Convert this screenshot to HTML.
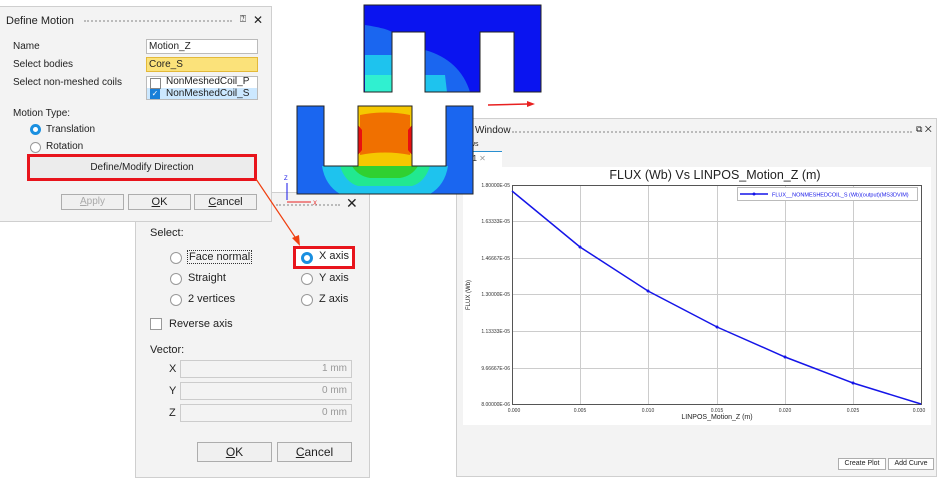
<!DOCTYPE html>
<html><head><style>
body{margin:0;width:940px;height:478px;background:#fff;position:relative;overflow:hidden;font-family:"Liberation Sans",sans-serif;font-size:10px;color:#222}
.a{position:absolute}
.dlg{background:#f3f3f3;border:1px solid #cfcfcf}
.inp{background:#fff;border:1px solid #bbb;box-sizing:border-box;padding-left:2px;line-height:13px}
.btn{background:#f0f0f0;border:1px solid #adadad;box-sizing:border-box;text-align:center}
.rad{width:11px;height:11px;border-radius:50%;border:1px solid #999;background:#fff;box-sizing:border-box}
.dots{border-top:2px dotted #bbb;height:0}
</style></head><body>

<!-- Direction dialog -->
<div class="a dlg" style="left:135px;top:192px;width:233px;height:284px"></div>
<div class="a dots" style="left:276px;top:204px;width:64px"></div>
<div class="a" style="left:346px;top:195px;font-size:14px">✕</div>
<div class="a" style="left:150px;top:227px;font-size:11px">Select:</div>
<div class="a rad" style="left:170px;top:252px;width:12px;height:12px"></div>
<div class="a" style="left:187px;top:250px;font-size:11px;border:1px dotted #333;padding:0 1px">Face normal</div>
<div class="a rad" style="left:170px;top:273px;width:12px;height:12px"></div>
<div class="a" style="left:188px;top:272px;font-size:11px">Straight</div>
<div class="a rad" style="left:170px;top:294px;width:12px;height:12px"></div>
<div class="a" style="left:188px;top:293px;font-size:11px">2 vertices</div>
<div class="a" style="left:293px;top:246px;width:62px;height:23px;border:3px solid #e8141c;box-sizing:border-box;background:#fff"></div>
<div class="a rad" style="left:301px;top:252px;width:12px;height:12px;border:3px solid #1a8fe0"></div>
<div class="a" style="left:319px;top:250px;font-size:11px">X axis</div>
<div class="a rad" style="left:301px;top:273px;width:12px;height:12px"></div>
<div class="a" style="left:319px;top:272px;font-size:11px">Y axis</div>
<div class="a rad" style="left:301px;top:294px;width:12px;height:12px"></div>
<div class="a" style="left:319px;top:293px;font-size:11px">Z axis</div>
<div class="a" style="left:150px;top:318px;width:12px;height:12px;border:1px solid #999;background:#fff;box-sizing:border-box"></div>
<div class="a" style="left:169px;top:318px;font-size:11px">Reverse axis</div>
<div class="a" style="left:150px;top:344px;font-size:11px">Vector:</div>
<div class="a" style="left:169px;top:363px;font-size:11px">X</div>
<div class="a" style="left:169px;top:385px;font-size:11px">Y</div>
<div class="a" style="left:169px;top:407px;font-size:11px">Z</div>
<div class="a" style="left:180px;top:360px;width:172px;height:18px;border:1px solid #ccc;background:#f3f3f3;box-sizing:border-box;text-align:right;padding-right:4px;color:#999;line-height:16px">1 mm</div>
<div class="a" style="left:180px;top:382px;width:172px;height:18px;border:1px solid #ccc;background:#f3f3f3;box-sizing:border-box;text-align:right;padding-right:4px;color:#999;line-height:16px">0 mm</div>
<div class="a" style="left:180px;top:404px;width:172px;height:18px;border:1px solid #ccc;background:#f3f3f3;box-sizing:border-box;text-align:right;padding-right:4px;color:#999;line-height:16px">0 mm</div>
<div class="a btn" style="left:197px;top:442px;width:75px;height:20px;line-height:18px;font-size:12px"><u>O</u>K</div>
<div class="a btn" style="left:277px;top:442px;width:75px;height:20px;line-height:18px;font-size:12px"><u>C</u>ancel</div>

<!-- Define Motion -->
<div class="a dlg" style="left:-1px;top:6px;width:271px;height:214px"></div>
<div class="a" style="left:6px;top:15px;font-size:11px">Define Motion</div>
<div class="a dots" style="left:84px;top:20px;width:148px"></div>
<div class="a" style="left:240px;top:14px;font-size:10px">⍰</div>
<div class="a" style="left:253px;top:13px;font-size:12px">✕</div>
<div class="a" style="left:13px;top:41px">Name</div>
<div class="a inp" style="left:146px;top:39px;width:112px;height:15px">Motion_Z</div>
<div class="a" style="left:13px;top:59px">Select bodies</div>
<div class="a inp" style="left:146px;top:57px;width:112px;height:15px;background:#fbe27a;border-color:#e3b93a">Core_S</div>
<div class="a" style="left:13px;top:77px">Select non-meshed coils</div>
<div class="a inp" style="left:146px;top:76px;width:112px;height:24px;padding:0"></div>
<div class="a" style="left:147px;top:88px;width:110px;height:11px;background:#cce8ff"></div>
<div class="a" style="left:150px;top:78px;width:9px;height:9px;border:1px solid #888;background:#fff"></div>
<div class="a" style="left:150px;top:89px;width:10px;height:10px;background:#1a7fd8;color:#fff;font-size:8px;line-height:10px;text-align:center">✓</div>
<div class="a" style="left:166px;top:76px">NonMeshedCoil_P</div>
<div class="a" style="left:166px;top:88px">NonMeshedCoil_S</div>
<div class="a" style="left:13px;top:108px">Motion Type:</div>
<div class="a rad" style="left:30px;top:124px;border:3px solid #1a8fe0"></div>
<div class="a" style="left:46px;top:124px">Translation</div>
<div class="a rad" style="left:30px;top:142px"></div>
<div class="a" style="left:46px;top:141px">Rotation</div>
<div class="a" style="left:27px;top:154px;width:230px;height:27px;border:3px solid #e8141c;box-sizing:border-box;background:#ececec;text-align:center;line-height:21px">Define/Modify Direction</div>
<div class="a btn" style="left:61px;top:194px;width:63px;height:16px;color:#aaa;line-height:14px"><u>A</u>pply</div>
<div class="a btn" style="left:128px;top:194px;width:63px;height:16px;line-height:14px;font-size:11px"><u>O</u>K</div>
<div class="a btn" style="left:194px;top:194px;width:63px;height:16px;line-height:14px;font-size:11px"><u>C</u>ancel</div>

<!-- Plot window -->
<div class="a dlg" style="left:456px;top:118px;width:479px;height:357px"></div>
<div class="a" style="left:475px;top:125px;font-size:10px">Window</div>
<div class="a dots" style="left:512px;top:131px;width:400px"></div>
<div class="a" style="left:916px;top:124px;font-size:9px">⧉ ✕</div>
<div class="a" style="left:470px;top:141px;font-size:7px">ws</div>
<div class="a" style="left:456px;top:151px;width:46px;height:15px;background:#fff;border-top:1px solid #2a8fd0"></div>
<div class="a" style="left:468px;top:154px;font-size:8px">t 1 <span style="color:#999">✕</span></div>
<div class="a" style="left:463px;top:167px;width:468px;height:258px;background:#fff"></div>
<div class="a" style="left:463px;top:168px;width:504px;text-align:center;font-size:12.5px;color:#222">FLUX (Wb) Vs LINPOS_Motion_Z (m)</div>
<svg class="a" style="left:0;top:0" width="940" height="478">
<g stroke="#ccc" stroke-width="1">
<line x1="580.5" y1="185" x2="580.5" y2="404"/><line x1="648.5" y1="185" x2="648.5" y2="404"/><line x1="717.5" y1="185" x2="717.5" y2="404"/><line x1="785.5" y1="185" x2="785.5" y2="404"/><line x1="853.5" y1="185" x2="853.5" y2="404"/>
<line x1="512" y1="221.5" x2="921" y2="221.5"/><line x1="512" y1="258.5" x2="921" y2="258.5"/><line x1="512" y1="294.5" x2="921" y2="294.5"/><line x1="512" y1="331.5" x2="921" y2="331.5"/><line x1="512" y1="368.5" x2="921" y2="368.5"/>
</g>
<rect x="512.5" y="185.5" width="409" height="219" fill="none" stroke="#555"/>
<polyline points="512,191 580,247 648,291 717,327 785,357 853,383 921,404" fill="none" stroke="#1515e8" stroke-width="1.5"/>
<g fill="#1515e8"><circle cx="580" cy="247" r="1.5"/><circle cx="648" cy="291" r="1.5"/><circle cx="717" cy="327" r="1.5"/><circle cx="785" cy="357" r="1.5"/><circle cx="853" cy="383" r="1.5"/></g>
<rect x="737.5" y="187.5" width="180" height="13" fill="#fff" stroke="#bbb"/>
<line x1="740" y1="194" x2="768" y2="194" stroke="#1515e8" stroke-width="1.5"/><circle cx="754" cy="194" r="1.5" fill="#1515e8"/>
<text x="772" y="196.5" font-size="5.5" fill="#1515e8" font-family="Liberation Sans">FLUX__NONMESHEDCOIL_S (Wb)(output)(MS3DVIM)</text>
<g font-size="5" fill="#333" font-family="Liberation Sans" text-anchor="end">
<text x="510" y="187">1.80000E-05</text><text x="510" y="223">1.63333E-05</text><text x="510" y="260">1.46667E-05</text><text x="510" y="296">1.30000E-05</text><text x="510" y="333">1.13333E-05</text><text x="510" y="370">9.66667E-06</text><text x="510" y="406">8.00000E-06</text>
</g>
<g font-size="5" fill="#333" font-family="Liberation Sans" text-anchor="middle">
<text x="514" y="412">0.000</text><text x="580" y="412">0.005</text><text x="648" y="412">0.010</text><text x="717" y="412">0.015</text><text x="785" y="412">0.020</text><text x="853" y="412">0.025</text><text x="919" y="412">0.030</text>
</g>
<text x="717" y="419" font-size="7" text-anchor="middle" fill="#222" font-family="Liberation Sans">LINPOS_Motion_Z (m)</text>
<text x="470" y="295" font-size="6" fill="#222" font-family="Liberation Sans" transform="rotate(-90 470 295)" text-anchor="middle">FLUX (Wb)</text>

<path d="M364,5H541V92H514V32H480V92H425V32H392V92H364Z" fill="#0a14f0"/>
<path d="M365,25 Q385,28 392,32 V92 H365Z" fill="#1a66f0"/>
<path d="M365,55 H392 V92 H365Z" fill="#1ec3ee"/>
<path d="M365,75 H392 V92 H365Z" fill="#30f0d0"/>
<path d="M425,50 Q460,60 470,92 H425Z" fill="#1a66f0"/>
<path d="M425,75 H445 L447,92 H425Z" fill="#1ec3ee"/>
<path d="M364,5H541V92H514V32H480V92H425V32H392V92H364Z" fill="none" stroke="#222" stroke-width="1"/>
<path d="M297,106H324V166H358V106H412V166H446V106H473V194H297Z" fill="#1a66f0"/>
<path d="M322,166 H448 Q445,185 430,194 H340 Q325,185 322,166Z" fill="#1ec3ee"/>
<path d="M340,166 H430 Q425,182 412,186 H358 Q345,182 340,166Z" fill="#22e890"/>
<path d="M352,166 H418 Q412,176 400,178 H370 Q358,176 352,166Z" fill="#30d030"/>
<rect x="358" y="106" width="54" height="60" fill="#f5c800"/>
<path d="M360,115 Q385,110 410,115 V155 Q385,150 360,155Z" fill="#f07000"/>
<path d="M358,125 L362,130 L362,150 L358,155Z M412,125 L408,130 L408,150 L412,155Z" fill="#e81010"/>
<path d="M297,106H324V166H358V106H412V166H446V106H473V194H297Z" fill="none" stroke="#222" stroke-width="1"/>
<line x1="287" y1="200" x2="287" y2="183" stroke="#1515e8"/><text x="284" y="180" font-size="6" fill="#1515e8">Z</text>
<line x1="287" y1="202" x2="311" y2="202" stroke="#e82020"/><text x="313" y="205" font-size="6" fill="#e82020">X</text>
<line x1="488" y1="105" x2="528" y2="104" stroke="#e82020" stroke-width="1.5"/><path d="M527,101 L535,104 L527,107Z" fill="#e82020"/>
<line x1="256" y1="179" x2="297" y2="240" stroke="#f04010" stroke-width="1.2"/><path d="M292,238 L300,246 L299,235Z" fill="#f04010"/>
</svg>
<div class="a btn" style="left:838px;top:458px;width:48px;height:12px;font-size:7px;line-height:10px;background:#fff">Create Plot</div>
<div class="a btn" style="left:888px;top:458px;width:46px;height:12px;font-size:7px;line-height:10px;background:#fff">Add Curve</div>
</body></html>
